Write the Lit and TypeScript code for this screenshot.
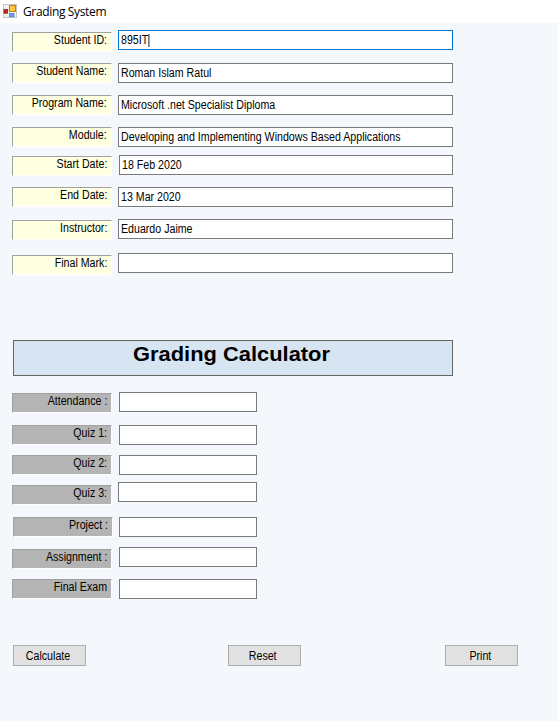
import { LitElement, html, css, nothing } from "lit";
import { customElement } from "lit/decorators.js";
import { styleMap } from "lit/directives/style-map.js";

interface Row {
  label: string;
  value?: string;
  height: number;
  labelDrop?: number;
  labelShift?: number;
  gap?: number;
  focus?: boolean;
}

const STUDENT: Row[] = [
  { label: "Student ID:", value: "895IT", height: 33, labelDrop: 2, focus: true },
  { label: "Student Name:", value: "Roman Islam Ratul", height: 32 },
  { label: "Program Name:", value: "Microsoft .net Specialist Diploma", height: 32 },
  { label: "Module:", value: "Developing and Implementing Windows Based Applications", height: 28 },
  { label: "Start Date:", value: "18 Feb 2020", height: 32, labelDrop: 1, gap: 7 },
  { label: "End Date:", value: "13 Mar 2020", height: 32 },
  { label: "Instructor:", value: "Eduardo Jaime", height: 34, labelDrop: 1 },
  { label: "Final Mark:", height: 20, labelDrop: 2 },
];

const MARKS: Row[] = [
  { label: "Attendance :", height: 33, labelDrop: 1, gap: 7 },
  { label: "Quiz 1:", height: 30, gap: 7 },
  { label: "Quiz 2:", height: 27, gap: 7 },
  { label: "Quiz 3:", height: 35, labelDrop: 3 },
  { label: "Project :", height: 30, labelShift: 1, gap: 6 },
  { label: "Assignment :", height: 32, labelDrop: 2, gap: 7 },
  { label: "Final Exam", height: 20, gap: 7 },
];

@customElement("grading-row")
class GradingRow extends LitElement {
  static properties = { row: { attribute: false }, gray: { type: Boolean } };
  declare row: Row;
  declare gray: boolean;

  static styles = css`
    :host { display: block; }
    .row { display: flex; align-items: flex-start; }
    .label {
      box-sizing: border-box; flex: none; width: 100px; height: 20px;
      border: 1px solid; border-color: #a0a0a0 #fff #fff #a0a0a0;
      background: #ffffe1; padding-right: 4px; text-align: right;
      line-height: 15px; white-space: nowrap;
    }
    .gray { background: #b4b4b4; }
    .label span { display: inline-block; transform: scaleX(0.886); transform-origin: right; }
    .field {
      box-sizing: border-box; flex: 1; height: 20px;
      border: 1px solid #7a7a7a; background: #fff; padding-left: 2px;
      line-height: 19px; white-space: nowrap; display: flex;
    }
    .value { display: flex; transform: scaleX(0.886); transform-origin: left; }
    .focus { border-color: #0078d7; }
    .caret { width: 1.13px; height: 13px; margin-top: 3px; background: #000; }
  `;

  render() {
    const r = this.row;
    return html`<div class="row" style=${styleMap({ height: `${r.height}px` })}>
      <div class="label ${this.gray ? "gray" : ""}"
        style=${styleMap({ marginTop: `${r.labelDrop ?? 0}px`, marginLeft: `${r.labelShift ?? 0}px`, marginRight: `${r.gap ?? 6}px` })}
      ><span>${r.label}</span></div>
      <div class="field ${r.focus ? "focus" : ""}">
        <div class="value">${r.value ?? ""}${r.focus ? html`<span class="caret"></span>` : nothing}</div>
      </div>
    </div>`;
  }
}

@customElement("app-root")
class AppRoot extends LitElement {
  static styles = css`
    :host {
      display: block; box-sizing: border-box; width: 558px; height: 721px; overflow: hidden;
      background: #f4f7fc; color: #000;
      font: 12px "Liberation Sans", Arial, sans-serif;
    }
    .titlebar {
      display: flex; align-items: center; height: 23px; background: #fff;
      padding-left: 3px; gap: 6px; 
      font: 12px "Open Sans", "Noto Sans", sans-serif; letter-spacing: -0.35px;
    }
    .title { line-height: 16px; margin-top: 1px; }
    .icon { display: block; flex: none; margin-top: -1px; }
    .student { width: 441px; margin: 7px 0 0 12px; height: 310px; }
    .banner {
      box-sizing: border-box; width: 440px; height: 36px; margin-left: 13px;
      border: 1px solid #646464; background: #d7e4f2; text-align: center;
      font-size: 21px; font-weight: 700; line-height: 26px;
      padding-right: 2px;
    }
    .banner span { display: inline-block; transform: scaleX(1.042); }
    .marks { width: 245px; margin: 16px 0 0 12px; }
    .actions { display: grid; grid-template-columns: 215px 217px 73px; margin: 46px 0 0 13px; }
    .button {
      box-sizing: border-box; width: 73px; height: 21px; border: 1px solid #adadad; border-radius: 0;
      background: #e1e1e1; padding: 0 3px 0 0; font: inherit; line-height: 20px; color: #000;
    }
    .button span { display: inline-block; transform: scaleX(0.886); }
  `;

  render() {
    return html`
      <div class="titlebar">
        <svg class="icon" width="14" height="14" viewBox="0 0 14 14">
          <rect x=".5" y=".5" width="13" height="13" fill="#f0f0f0" stroke="#c8c8c8" />
          <rect x="1" y="5.5" width="3.7" height="3.7" fill="#c62c20" stroke="#8e190f" stroke-width=".7" />
          <rect x="6.5" y="1.5" width="6" height="6" fill="#fbc943" stroke="#bd8312" />
          <rect x="6.4" y="9.4" width="4.6" height="3.4" fill="#6e9cf0" stroke="#3a68c8" stroke-width=".6" />
        </svg>
        <span class="title">Grading System</span>
      </div>
      <div class="student">${STUDENT.map((r) => html`<grading-row .row=${r}></grading-row>`)}</div>
      <div class="banner"><span>Grading Calculator</span></div>
      <div class="marks">${MARKS.map((r) => html`<grading-row .row=${r} gray></grading-row>`)}</div>
      <div class="actions">
        ${["Calculate", "Reset", "Print"].map((t) => html`<button class="button"><span>${t}</span></button>`)}
      </div>
    `;
  }
}
